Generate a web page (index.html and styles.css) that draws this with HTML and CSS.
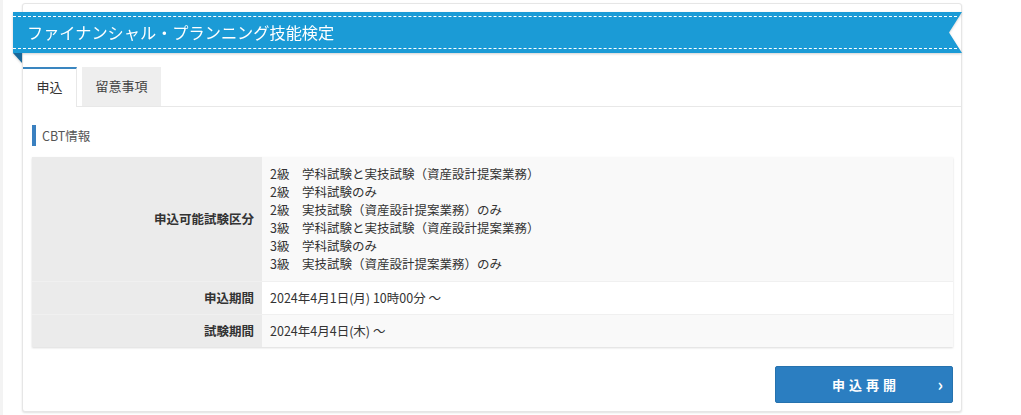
FILE: index.html
```html
<!DOCTYPE html>
<html lang="ja">
<head>
    <meta charset="UTF-8">
    <meta name="viewport" content="width=device-width, initial-scale=1.0">
    <title>ファイナンシャル・プランニング技能検定</title>
    <link rel="stylesheet" href="styles.css">
</head>
<body>
    <div class="page">
        <div class="card">
            <div class="ribbon-wrap">
                <h1 class="ribbon">ファイナンシャル・プランニング技能検定</h1>
                <span class="ribbon-fold"></span>
            </div>

            <div class="tabs">
                <div class="tab active">申込</div>
                <div class="tab">留意事項</div>
            </div>

            <div class="content">
                <h2 class="section-title">CBT情報</h2>

                <table class="info">
                    <tr>
                        <th>申込可能試験区分</th>
                        <td>
                            2級　学科試験と実技試験（資産設計提案業務）<br>
                            2級　学科試験のみ<br>
                            2級　実技試験（資産設計提案業務）のみ<br>
                            3級　学科試験と実技試験（資産設計提案業務）<br>
                            3級　学科試験のみ<br>
                            3級　実技試験（資産設計提案業務）のみ
                        </td>
                    </tr>
                    <tr>
                        <th>申込期間</th>
                        <td>2024年4月1日(月) 10時00分 ～</td>
                    </tr>
                    <tr>
                        <th>試験期間</th>
                        <td>2024年4月4日(木) ～</td>
                    </tr>
                </table>

                <div class="actions">
                    <button class="btn">申込再開<span class="chev">›</span></button>
                </div>
            </div>
        </div>
    </div>
</body>
</html>
```

FILE: styles.css
```css
* {
    margin: 0;
    padding: 0;
    box-sizing: border-box;
}

body {
    background-color: #fff;
    color: #333;
    font-family: "Noto Sans CJK JP", "Noto Sans", sans-serif;
    font-size: 12.5px;
}

.page {
    border-left: 3px solid #f3f3f3;
    min-height: 415px;
    padding: 3px 0 0 19px;
}

.card {
    width: 940px;
    background-color: #fff;
    border: 1px solid #e6e6e6;
    border-radius: 3px;
    box-shadow: 0 1px 2px rgba(0, 0, 0, 0.12);
    padding-top: 8px;
    padding-bottom: 8px;
}

.ribbon-wrap {
    position: relative;
    margin-left: -10px;
    margin-right: -1px;
    filter: drop-shadow(0 1px 1px rgba(0, 0, 0, 0.18));
}

.ribbon {
    position: relative;
    height: 41px;
    background-color: #1b9bd6;
    color: #fff;
    font-size: 16.2px;
    font-weight: normal;
    line-height: 41px;
    padding-left: 14px;
    clip-path: polygon(0 0, 100% 0, calc(100% - 13px) 50%, 100% 100%, 0 100%);
}

.ribbon::before {
    content: '';
    position: absolute;
    left: 0;
    right: 0;
    top: 4px;
    bottom: 4px;
    border-top: 1px dashed #fff;
    border-bottom: 1px dashed #fff;
}

.ribbon-fold {
    position: absolute;
    left: 0;
    top: 41px;
    width: 9px;
    height: 10px;
    background-color: #17679a;
    clip-path: polygon(0 0, 100% 0, 100% 100%);
}

.tabs {
    display: flex;
    gap: 5px;
    margin-top: 14px;
    border-bottom: 1px solid #e8e8e8;
}

.tab {
    width: 79px;
    height: 39px;
    line-height: 38px;
    text-align: center;
    font-size: 13px;
    color: #444;
    background-color: #eeeeee;
}

.tab.active {
    width: 54px;
    color: #333;
    background-color: #fff;
    border-top: 2px solid #3a86c0;
    border-right: 1px solid #e8e8e8;
    margin-bottom: -1px;
    height: 40px;
    line-height: 36px;
}

.content {
    padding: 18px 8px 0 9px;
}

.section-title {
    font-size: 12.5px;
    font-weight: normal;
    color: #555;
    border-left: 4px solid #3a80c0;
    padding-left: 6px;
    height: 21px;
    line-height: 21px;
    margin-bottom: 11px;
}

.info {
    width: 100%;
    border-collapse: collapse;
    box-shadow: 0 1px 2px rgba(0, 0, 0, 0.15);
}

.info th,
.info td {
    line-height: 18px;
    padding: 7px 8px;
    border-top: 1px solid #f0f0f0;
}

.info tr:first-child th,
.info tr:first-child td {
    border-top: none;
    padding-top: 8px;
    padding-bottom: 8px;
}

.info th {
    width: 230px;
    background-color: #ebebeb;
    text-align: right;
    font-weight: bold;
    color: #333;
    vertical-align: middle;
}

.info td {
    background-color: #f9f9f9;
    color: #333;
    text-align: left;
}

.info tr:nth-child(2) td {
    background-color: #fff;
}

.actions {
    display: flex;
    justify-content: flex-end;
    margin-top: 19px;
}

.btn {
    position: relative;
    width: 178px;
    height: 37px;
    background-color: #2b7ec1;
    color: #fff;
    border: 1px solid #2672ae;
    border-radius: 2px;
    font-family: inherit;
    font-size: 13px;
    font-weight: bold;
    letter-spacing: 4px;
    padding-left: 4px;
    cursor: pointer;
}

.chev {
    position: absolute;
    right: 9px;
    top: 50%;
    transform: translateY(-55%);
    font-size: 17px;
    letter-spacing: 0;
    font-weight: bold;
}
```
